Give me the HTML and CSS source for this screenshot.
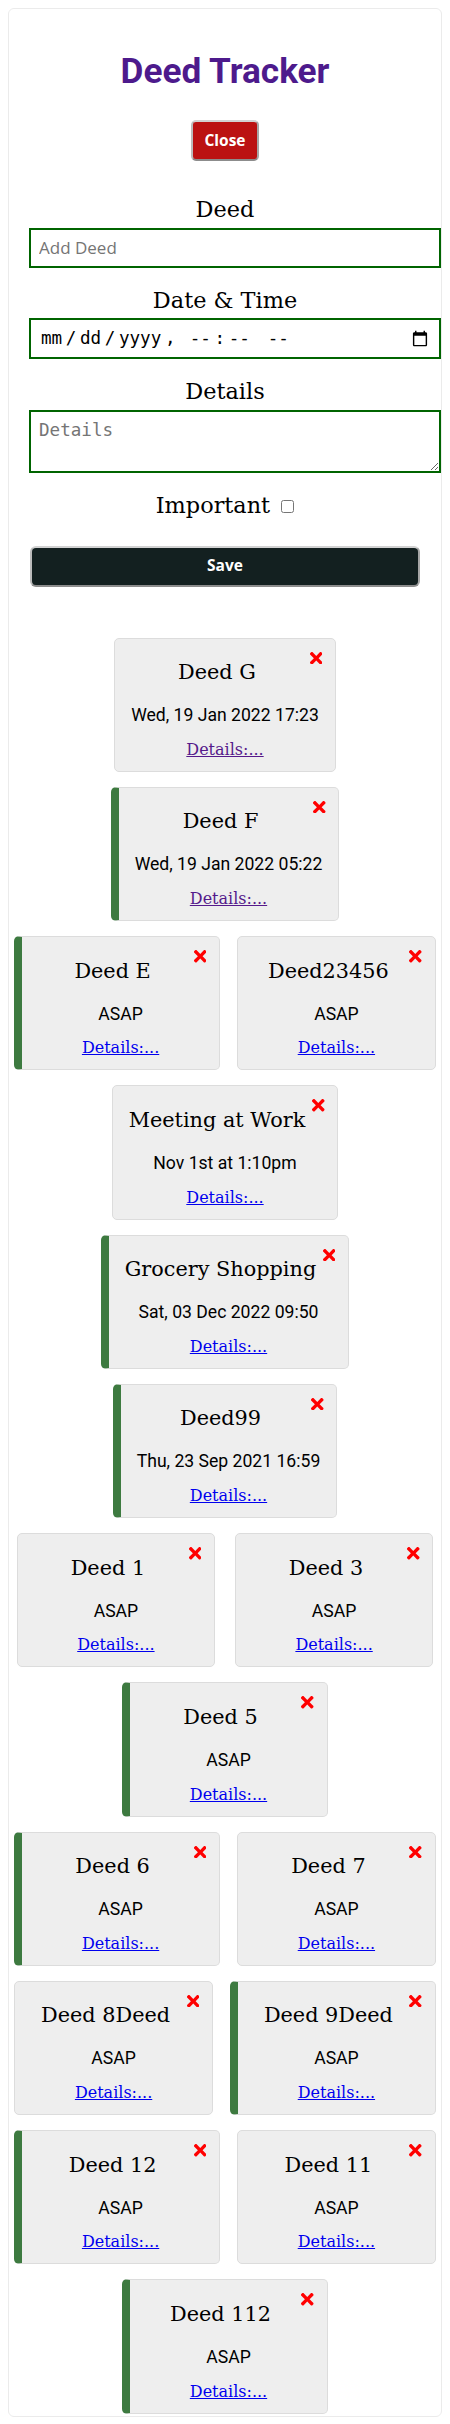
FILE: index.html
```html
<!DOCTYPE html>
<html lang="en">
<head>
<meta charset="utf-8">
<title>Deed Tracker</title>
<link rel="stylesheet" href="styles.css">
</head>
<body>
<div class="container">
  <header class="header">
    <h1 class="title">Deed Tracker</h1>
    <button class="btn btn-close" type="button">Close</button>
  </header>

  <form class="add-form">
    <div class="form-control">
      <label class="form-label" for="deed">Deed</label>
      <input class="field field-text" id="deed" type="text" placeholder="Add Deed">
    </div>
    <div class="form-control">
      <label class="form-label" for="when">Date &amp; Time</label>
      <input class="field field-date" id="when" type="datetime-local">
    </div>
    <div class="form-control">
      <label class="form-label" for="details">Details</label>
      <textarea class="field field-area" id="details" placeholder="Details"></textarea>
    </div>
    <div class="form-check">
      <label for="important">Important</label> <input class="check" id="important" type="checkbox">
    </div>
    <button class="btn btn-save" type="button">Save</button>
  </form>

  <div class="deeds">
    <div class="deed-row">
      <div class="deed">
        <h3 class="deed-title">Deed G</h3>
        <svg class="deed-delete" viewBox="0 80 352 352"><path d="M242.72 256l100.07-100.07c12.28-12.28 12.28-32.19 0-44.48l-22.24-22.24c-12.28-12.28-32.19-12.28-44.48 0L176 189.28 75.93 89.21c-12.28-12.28-32.19-12.28-44.48 0L9.21 111.45c-12.28 12.28-12.28 32.19 0 44.48L109.28 256 9.21 356.07c-12.28 12.28-12.28 32.19 0 44.48l22.24 22.24c12.28 12.28 32.2 12.28 44.48 0L176 322.72l100.07 100.07c12.28 12.28 32.2 12.28 44.48 0l22.24-22.24c12.28-12.28 12.28-32.19 0-44.48L242.72 256z"/></svg>
        <p class="deed-date">Wed, 19 Jan 2022 17:23</p>
        <a class="deed-link deed-link-visited" href="#g">Details:...</a>
      </div>
    </div>

    <div class="deed-row">
      <div class="deed deed-important">
        <h3 class="deed-title">Deed F</h3>
        <svg class="deed-delete" viewBox="0 80 352 352"><path d="M242.72 256l100.07-100.07c12.28-12.28 12.28-32.19 0-44.48l-22.24-22.24c-12.28-12.28-32.19-12.28-44.48 0L176 189.28 75.93 89.21c-12.28-12.28-32.19-12.28-44.48 0L9.21 111.45c-12.28 12.28-12.28 32.19 0 44.48L109.28 256 9.21 356.07c-12.28 12.28-12.28 32.19 0 44.48l22.24 22.24c12.28 12.28 32.2 12.28 44.48 0L176 322.72l100.07 100.07c12.28 12.28 32.2 12.28 44.48 0l22.24-22.24c12.28-12.28 12.28-32.19 0-44.48L242.72 256z"/></svg>
        <p class="deed-date">Wed, 19 Jan 2022 05:22</p>
        <a class="deed-link deed-link-visited" href="#f">Details:...</a>
      </div>
    </div>

    <div class="deed-row">
      <div class="deed deed-important">
        <h3 class="deed-title">Deed E</h3>
        <svg class="deed-delete" viewBox="0 80 352 352"><path d="M242.72 256l100.07-100.07c12.28-12.28 12.28-32.19 0-44.48l-22.24-22.24c-12.28-12.28-32.19-12.28-44.48 0L176 189.28 75.93 89.21c-12.28-12.28-32.19-12.28-44.48 0L9.21 111.45c-12.28 12.28-12.28 32.19 0 44.48L109.28 256 9.21 356.07c-12.28 12.28-12.28 32.19 0 44.48l22.24 22.24c12.28 12.28 32.2 12.28 44.48 0L176 322.72l100.07 100.07c12.28 12.28 32.2 12.28 44.48 0l22.24-22.24c12.28-12.28 12.28-32.19 0-44.48L242.72 256z"/></svg>
        <p class="deed-date">ASAP</p>
        <a class="deed-link" href="#e">Details:...</a>
      </div>
      <div class="deed">
        <h3 class="deed-title">Deed23456</h3>
        <svg class="deed-delete" viewBox="0 80 352 352"><path d="M242.72 256l100.07-100.07c12.28-12.28 12.28-32.19 0-44.48l-22.24-22.24c-12.28-12.28-32.19-12.28-44.48 0L176 189.28 75.93 89.21c-12.28-12.28-32.19-12.28-44.48 0L9.21 111.45c-12.28 12.28-12.28 32.19 0 44.48L109.28 256 9.21 356.07c-12.28 12.28-12.28 32.19 0 44.48l22.24 22.24c12.28 12.28 32.2 12.28 44.48 0L176 322.72l100.07 100.07c12.28 12.28 32.2 12.28 44.48 0l22.24-22.24c12.28-12.28 12.28-32.19 0-44.48L242.72 256z"/></svg>
        <p class="deed-date">ASAP</p>
        <a class="deed-link" href="#d23456">Details:...</a>
      </div>
    </div>

    <div class="deed-row">
      <div class="deed">
        <h3 class="deed-title">Meeting at Work</h3>
        <svg class="deed-delete" viewBox="0 80 352 352"><path d="M242.72 256l100.07-100.07c12.28-12.28 12.28-32.19 0-44.48l-22.24-22.24c-12.28-12.28-32.19-12.28-44.48 0L176 189.28 75.93 89.21c-12.28-12.28-32.19-12.28-44.48 0L9.21 111.45c-12.28 12.28-12.28 32.19 0 44.48L109.28 256 9.21 356.07c-12.28 12.28-12.28 32.19 0 44.48l22.24 22.24c12.28 12.28 32.2 12.28 44.48 0L176 322.72l100.07 100.07c12.28 12.28 32.2 12.28 44.48 0l22.24-22.24c12.28-12.28 12.28-32.19 0-44.48L242.72 256z"/></svg>
        <p class="deed-date">Nov 1st at 1:10pm</p>
        <a class="deed-link" href="#meeting">Details:...</a>
      </div>
    </div>

    <div class="deed-row">
      <div class="deed deed-important">
        <h3 class="deed-title">Grocery Shopping</h3>
        <svg class="deed-delete" viewBox="0 80 352 352"><path d="M242.72 256l100.07-100.07c12.28-12.28 12.28-32.19 0-44.48l-22.24-22.24c-12.28-12.28-32.19-12.28-44.48 0L176 189.28 75.93 89.21c-12.28-12.28-32.19-12.28-44.48 0L9.21 111.45c-12.28 12.28-12.28 32.19 0 44.48L109.28 256 9.21 356.07c-12.28 12.28-12.28 32.19 0 44.48l22.24 22.24c12.28 12.28 32.2 12.28 44.48 0L176 322.72l100.07 100.07c12.28 12.28 32.2 12.28 44.48 0l22.24-22.24c12.28-12.28 12.28-32.19 0-44.48L242.72 256z"/></svg>
        <p class="deed-date">Sat, 03 Dec 2022 09:50</p>
        <a class="deed-link" href="#grocery">Details:...</a>
      </div>
    </div>

    <div class="deed-row">
      <div class="deed deed-important">
        <h3 class="deed-title">Deed99</h3>
        <svg class="deed-delete" viewBox="0 80 352 352"><path d="M242.72 256l100.07-100.07c12.28-12.28 12.28-32.19 0-44.48l-22.24-22.24c-12.28-12.28-32.19-12.28-44.48 0L176 189.28 75.93 89.21c-12.28-12.28-32.19-12.28-44.48 0L9.21 111.45c-12.28 12.28-12.28 32.19 0 44.48L109.28 256 9.21 356.07c-12.28 12.28-12.28 32.19 0 44.48l22.24 22.24c12.28 12.28 32.2 12.28 44.48 0L176 322.72l100.07 100.07c12.28 12.28 32.2 12.28 44.48 0l22.24-22.24c12.28-12.28 12.28-32.19 0-44.48L242.72 256z"/></svg>
        <p class="deed-date">Thu, 23 Sep 2021 16:59</p>
        <a class="deed-link" href="#d99">Details:...</a>
      </div>
    </div>

    <div class="deed-row">
      <div class="deed">
        <h3 class="deed-title">Deed 1</h3>
        <svg class="deed-delete" viewBox="0 80 352 352"><path d="M242.72 256l100.07-100.07c12.28-12.28 12.28-32.19 0-44.48l-22.24-22.24c-12.28-12.28-32.19-12.28-44.48 0L176 189.28 75.93 89.21c-12.28-12.28-32.19-12.28-44.48 0L9.21 111.45c-12.28 12.28-12.28 32.19 0 44.48L109.28 256 9.21 356.07c-12.28 12.28-12.28 32.19 0 44.48l22.24 22.24c12.28 12.28 32.2 12.28 44.48 0L176 322.72l100.07 100.07c12.28 12.28 32.2 12.28 44.48 0l22.24-22.24c12.28-12.28 12.28-32.19 0-44.48L242.72 256z"/></svg>
        <p class="deed-date">ASAP</p>
        <a class="deed-link" href="#d1">Details:...</a>
      </div>
      <div class="deed">
        <h3 class="deed-title">Deed 3</h3>
        <svg class="deed-delete" viewBox="0 80 352 352"><path d="M242.72 256l100.07-100.07c12.28-12.28 12.28-32.19 0-44.48l-22.24-22.24c-12.28-12.28-32.19-12.28-44.48 0L176 189.28 75.93 89.21c-12.28-12.28-32.19-12.28-44.48 0L9.21 111.45c-12.28 12.28-12.28 32.19 0 44.48L109.28 256 9.21 356.07c-12.28 12.28-12.28 32.19 0 44.48l22.24 22.24c12.28 12.28 32.2 12.28 44.48 0L176 322.72l100.07 100.07c12.28 12.28 32.2 12.28 44.48 0l22.24-22.24c12.28-12.28 12.28-32.19 0-44.48L242.72 256z"/></svg>
        <p class="deed-date">ASAP</p>
        <a class="deed-link" href="#d3">Details:...</a>
      </div>
    </div>

    <div class="deed-row">
      <div class="deed deed-important">
        <h3 class="deed-title">Deed 5</h3>
        <svg class="deed-delete" viewBox="0 80 352 352"><path d="M242.72 256l100.07-100.07c12.28-12.28 12.28-32.19 0-44.48l-22.24-22.24c-12.28-12.28-32.19-12.28-44.48 0L176 189.28 75.93 89.21c-12.28-12.28-32.19-12.28-44.48 0L9.21 111.45c-12.28 12.28-12.28 32.19 0 44.48L109.28 256 9.21 356.07c-12.28 12.28-12.28 32.19 0 44.48l22.24 22.24c12.28 12.28 32.2 12.28 44.48 0L176 322.72l100.07 100.07c12.28 12.28 32.2 12.28 44.48 0l22.24-22.24c12.28-12.28 12.28-32.19 0-44.48L242.72 256z"/></svg>
        <p class="deed-date">ASAP</p>
        <a class="deed-link" href="#d5">Details:...</a>
      </div>
    </div>

    <div class="deed-row">
      <div class="deed deed-important">
        <h3 class="deed-title">Deed 6</h3>
        <svg class="deed-delete" viewBox="0 80 352 352"><path d="M242.72 256l100.07-100.07c12.28-12.28 12.28-32.19 0-44.48l-22.24-22.24c-12.28-12.28-32.19-12.28-44.48 0L176 189.28 75.93 89.21c-12.28-12.28-32.19-12.28-44.48 0L9.21 111.45c-12.28 12.28-12.28 32.19 0 44.48L109.28 256 9.21 356.07c-12.28 12.28-12.28 32.19 0 44.48l22.24 22.24c12.28 12.28 32.2 12.28 44.48 0L176 322.72l100.07 100.07c12.28 12.28 32.2 12.28 44.48 0l22.24-22.24c12.28-12.28 12.28-32.19 0-44.48L242.72 256z"/></svg>
        <p class="deed-date">ASAP</p>
        <a class="deed-link" href="#d6">Details:...</a>
      </div>
      <div class="deed">
        <h3 class="deed-title">Deed 7</h3>
        <svg class="deed-delete" viewBox="0 80 352 352"><path d="M242.72 256l100.07-100.07c12.28-12.28 12.28-32.19 0-44.48l-22.24-22.24c-12.28-12.28-32.19-12.28-44.48 0L176 189.28 75.93 89.21c-12.28-12.28-32.19-12.28-44.48 0L9.21 111.45c-12.28 12.28-12.28 32.19 0 44.48L109.28 256 9.21 356.07c-12.28 12.28-12.28 32.19 0 44.48l22.24 22.24c12.28 12.28 32.2 12.28 44.48 0L176 322.72l100.07 100.07c12.28 12.28 32.2 12.28 44.48 0l22.24-22.24c12.28-12.28 12.28-32.19 0-44.48L242.72 256z"/></svg>
        <p class="deed-date">ASAP</p>
        <a class="deed-link" href="#d7">Details:...</a>
      </div>
    </div>

    <div class="deed-row">
      <div class="deed">
        <h3 class="deed-title">Deed 8Deed</h3>
        <svg class="deed-delete" viewBox="0 80 352 352"><path d="M242.72 256l100.07-100.07c12.28-12.28 12.28-32.19 0-44.48l-22.24-22.24c-12.28-12.28-32.19-12.28-44.48 0L176 189.28 75.93 89.21c-12.28-12.28-32.19-12.28-44.48 0L9.21 111.45c-12.28 12.28-12.28 32.19 0 44.48L109.28 256 9.21 356.07c-12.28 12.28-12.28 32.19 0 44.48l22.24 22.24c12.28 12.28 32.2 12.28 44.48 0L176 322.72l100.07 100.07c12.28 12.28 32.2 12.28 44.48 0l22.24-22.24c12.28-12.28 12.28-32.19 0-44.48L242.72 256z"/></svg>
        <p class="deed-date">ASAP</p>
        <a class="deed-link" href="#d8">Details:...</a>
      </div>
      <div class="deed deed-important">
        <h3 class="deed-title">Deed 9Deed</h3>
        <svg class="deed-delete" viewBox="0 80 352 352"><path d="M242.72 256l100.07-100.07c12.28-12.28 12.28-32.19 0-44.48l-22.24-22.24c-12.28-12.28-32.19-12.28-44.48 0L176 189.28 75.93 89.21c-12.28-12.28-32.19-12.28-44.48 0L9.21 111.45c-12.28 12.28-12.28 32.19 0 44.48L109.28 256 9.21 356.07c-12.28 12.28-12.28 32.19 0 44.48l22.24 22.24c12.28 12.28 32.2 12.28 44.48 0L176 322.72l100.07 100.07c12.28 12.28 32.2 12.28 44.48 0l22.24-22.24c12.28-12.28 12.28-32.19 0-44.48L242.72 256z"/></svg>
        <p class="deed-date">ASAP</p>
        <a class="deed-link" href="#d9">Details:...</a>
      </div>
    </div>

    <div class="deed-row">
      <div class="deed deed-important">
        <h3 class="deed-title">Deed 12</h3>
        <svg class="deed-delete" viewBox="0 80 352 352"><path d="M242.72 256l100.07-100.07c12.28-12.28 12.28-32.19 0-44.48l-22.24-22.24c-12.28-12.28-32.19-12.28-44.48 0L176 189.28 75.93 89.21c-12.28-12.28-32.19-12.28-44.48 0L9.21 111.45c-12.28 12.28-12.28 32.19 0 44.48L109.28 256 9.21 356.07c-12.28 12.28-12.28 32.19 0 44.48l22.24 22.24c12.28 12.28 32.2 12.28 44.48 0L176 322.72l100.07 100.07c12.28 12.28 32.2 12.28 44.48 0l22.24-22.24c12.28-12.28 12.28-32.19 0-44.48L242.72 256z"/></svg>
        <p class="deed-date">ASAP</p>
        <a class="deed-link" href="#d12">Details:...</a>
      </div>
      <div class="deed">
        <h3 class="deed-title">Deed 11</h3>
        <svg class="deed-delete" viewBox="0 80 352 352"><path d="M242.72 256l100.07-100.07c12.28-12.28 12.28-32.19 0-44.48l-22.24-22.24c-12.28-12.28-32.19-12.28-44.48 0L176 189.28 75.93 89.21c-12.28-12.28-32.19-12.28-44.48 0L9.21 111.45c-12.28 12.28-12.28 32.19 0 44.48L109.28 256 9.21 356.07c-12.28 12.28-12.28 32.19 0 44.48l22.24 22.24c12.28 12.28 32.2 12.28 44.48 0L176 322.72l100.07 100.07c12.28 12.28 32.2 12.28 44.48 0l22.24-22.24c12.28-12.28 12.28-32.19 0-44.48L242.72 256z"/></svg>
        <p class="deed-date">ASAP</p>
        <a class="deed-link" href="#d11">Details:...</a>
      </div>
    </div>

    <div class="deed-row">
      <div class="deed deed-important">
        <h3 class="deed-title">Deed 112</h3>
        <svg class="deed-delete" viewBox="0 80 352 352"><path d="M242.72 256l100.07-100.07c12.28-12.28 12.28-32.19 0-44.48l-22.24-22.24c-12.28-12.28-32.19-12.28-44.48 0L176 189.28 75.93 89.21c-12.28-12.28-32.19-12.28-44.48 0L9.21 111.45c-12.28 12.28-12.28 32.19 0 44.48L109.28 256 9.21 356.07c-12.28 12.28-12.28 32.19 0 44.48l22.24 22.24c12.28 12.28 32.2 12.28 44.48 0L176 322.72l100.07 100.07c12.28 12.28 32.2 12.28 44.48 0l22.24-22.24c12.28-12.28 12.28-32.19 0-44.48L242.72 256z"/></svg>
        <p class="deed-date">ASAP</p>
        <a class="deed-link" href="#d112">Details:...</a>
      </div>
    </div>
  </div>
</div>
</body>
</html>
```

FILE: styles.css
```css
html, body {
  background: #ffffff;
}

body {
  margin: 8px;
  font-family: "DejaVu Serif", serif;
  color: #000000;
}

.container {
  border: 1px solid #ebebeb;
  border-radius: 6px;
  padding: 41.5px 0 2px;
}

.header {
  text-align: center;
}

.title {
  margin: 0;
  font: 700 35.2px/41px Roboto, "Liberation Sans", sans-serif;
  color: #4d1a8c;
}

.btn {
  display: block;
  box-sizing: border-box;
  height: 41px;
  font: 700 15.5px/1 "Open Sans", "DejaVu Sans", sans-serif;
  color: #ffffff;
  border-width: 2px;
  border-style: solid;
  border-color: #d2d2d2 #a6a6a6 #8c8c8c #bcbcbc;
  cursor: pointer;
}

.btn-close {
  margin: 28.5px auto 0;
  padding: 0 11px;
  background: #bb1212;
  border-radius: 5px;
}

.add-form {
  margin-top: 35px;
  padding: 0 20px;
}

.form-control {
  margin-bottom: 19px;
}

.form-label {
  display: block;
  text-align: center;
  font: 22.4px/26px "DejaVu Serif", serif;
  margin-bottom: 5.5px;
}

.field {
  display: block;
  box-sizing: content-box;
  width: 100%;
  margin: 0;
  padding: 8px;
  border: 2px solid #006400;
  border-radius: 0;
  background: #ffffff;
  color: #000000;
  outline: none;
}

.field-text {
  height: 20px;
  font: 17px/20px "Open Sans", "DejaVu Sans", sans-serif;
}

.field-text::placeholder {
  color: #757575;
}

.field-date {
  height: 21px;
  font: 17.6px/21px "DejaVu Sans Mono", monospace;
}

.field-date::-webkit-datetime-edit-text {
  padding: 0 2.6px;
}

.field-date::-webkit-datetime-edit-fields-wrapper {
  padding-left: 1px;
}

.field-area {
  height: 43.5px;
  resize: vertical;
  font: 17.6px/20.5px "DejaVu Sans Mono", monospace;
}

.form-check {
  text-align: center;
  font: 22.4px/26px "DejaVu Serif", serif;
}

.check {
  width: 13px;
  height: 13px;
  margin: 0 0 0 4px;
  vertical-align: baseline;
}

.btn-save {
  width: calc(100% - 2px);
  margin: 27.5px 1px 0;
  padding: 0;
  background: #132020;
  border-radius: 6px;
}

.deeds {
  margin-top: 51px;
  display: flex;
  flex-direction: column;
  row-gap: 15px;
}

.deed-row {
  display: flex;
  justify-content: space-evenly;
  column-gap: 12px;
}

.deed {
  position: relative;
  flex: none;
  min-width: 164.5px;
  padding: 21.5px 16px 12px;
  background: #eeeeee;
  border: 1px solid #dcdcdc;
  border-radius: 5px;
  text-align: center;
}

.deed-important {
  border-left: 8px solid #3d7a40;
}

.deed-title {
  margin: 0;
  padding-right: 16px;
  font: 400 20.8px/24px "DejaVu Serif", serif;
  white-space: nowrap;
}

.deed-delete {
  position: absolute;
  top: 13px;
  right: 12.8px;
  width: 12.5px;
  height: 12.5px;
  fill: #ff0000;
  cursor: pointer;
}

.deed-date {
  margin: 21px 0 0;
  font: 400 17.6px/21px Roboto, "Liberation Sans", sans-serif;
  color: #000000;
  white-space: nowrap;
}

.deed-link {
  display: block;
  margin-top: 13.75px;
  font: 16px/19px "DejaVu Serif", serif;
  color: #0000ee;
  text-decoration: underline;
}

.deed-link-visited {
  color: #551a8b;
}
```
